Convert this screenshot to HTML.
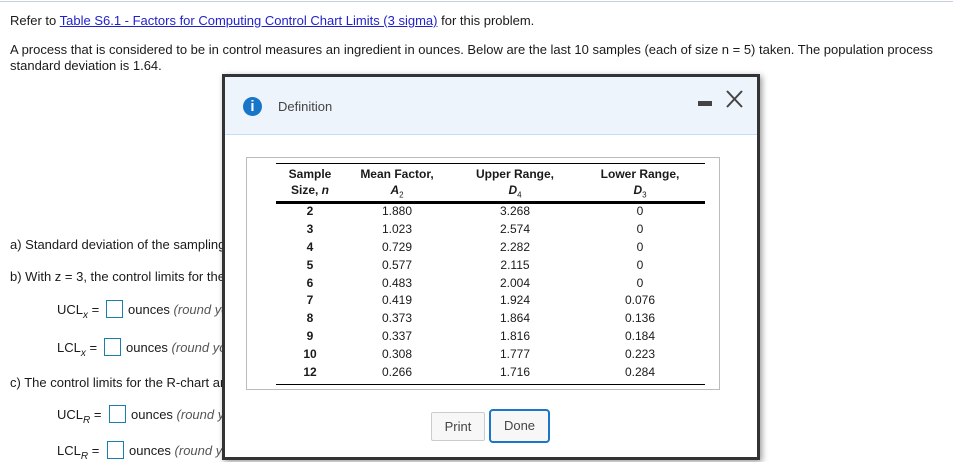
<!DOCTYPE html>
<html><head><style>
body{margin:0;width:953px;height:462px;position:relative;overflow:hidden;background:#fff;font-family:"Liberation Sans",Arial,sans-serif;font-size:13px;color:#1a1a1a}
.a{position:absolute;white-space:nowrap}
a{color:#2222cc;text-decoration:underline}
.box{position:absolute;width:15px;height:16px;border:1px solid #1a7fa8;background:#fff}
i.g{color:#555}
.sub{font-size:10px;position:relative;top:4px;font-style:italic}
.dlg{position:absolute;left:222px;top:74px;width:532px;height:380px;border:3px solid #333;background:#fff;box-shadow:2px 2px 6px rgba(0,0,0,.4);font-size:12px}
.hd{position:absolute;left:0;top:0;width:532px;height:57px;background:#eef4fc;border-bottom:1px solid #c6dcf2}
.tb{position:absolute;left:21px;top:80px;width:472px;height:231px;border:1px solid #bbb}
.r{position:absolute;height:14px;font-size:12px}
.c{position:absolute;text-align:center;width:80px}
.btn{position:absolute;font-size:13px;color:#444;text-align:center;background:#f7f7f7}
</style></head><body>
<div class="a" style="left:0;top:1px;width:953px;border-top:1px solid #c8d0de"></div>
<div class="a" style="left:10px;top:13px">Refer to <a>Table S6.1 - Factors for Computing Control Chart Limits (3 sigma)</a> for this problem.</div>
<div class="a" style="left:10px;top:42px">A process that is considered to be in control measures an ingredient in ounces. Below are the last 10 samples (each of size n = 5) taken. The population process</div>
<div class="a" style="left:10px;top:58px">standard deviation is 1.64.</div>
<div class="a" style="left:10px;top:237px">a) Standard deviation of the sampling distribution</div>
<div class="a" style="left:10px;top:269px">b) With z = 3, the control limits for the mean chart are:</div>
<div class="a" style="left:57px;top:302px">UCL<span class="sub">x</span> =</div>
<div class="box" style="left:106px;top:300px"></div>
<div class="a" style="left:128px;top:302px">ounces <i class="g">(round your response)</i></div>
<div class="a" style="left:57px;top:340px">LCL<span class="sub">x</span> =</div>
<div class="box" style="left:104px;top:338px"></div>
<div class="a" style="left:126px;top:340px">ounces <i class="g">(round your response)</i></div>
<div class="a" style="left:10px;top:375px">c) The control limits for the R-chart are:</div>
<div class="a" style="left:57px;top:407px">UCL<span class="sub">R</span> =</div>
<div class="box" style="left:109px;top:405px"></div>
<div class="a" style="left:131px;top:407px">ounces <i class="g">(round your response)</i></div>
<div class="a" style="left:57px;top:443px">LCL<span class="sub">R</span> =</div>
<div class="box" style="left:107px;top:441px"></div>
<div class="a" style="left:129px;top:443px">ounces <i class="g">(round your response)</i></div>

<div class="dlg">
 <div class="hd">
  <div class="a" style="left:18px;top:20px;width:19px;height:19px;border-radius:50%;background:#1876c9;color:#fff;font:bold 15px 'Liberation Sans',sans-serif;text-align:center;line-height:19px">i</div>
  <div class="a" style="left:53px;top:22px;font-size:13px;color:#444">Definition</div>
  <div class="a" style="left:473px;top:24px;width:14px;height:5px;background:#444"></div>
  <svg class="a" style="left:500px;top:13px" width="20" height="18"><path d="M2 1L17 17M17 1L2 17" stroke="#444" stroke-width="2"/></svg>
 </div>
 <div class="tb">
  <div class="a" style="left:29px;top:5px;width:429px;border-top:1px solid #000"></div>
  <div class="a" style="left:29px;top:43px;width:429px;border-top:3px solid #000"></div>
  <div class="a" style="left:29px;top:226px;width:429px;border-top:1px solid #000"></div>
  <div style="position:absolute;left:0;top:8px;font-weight:bold;font-size:12px;line-height:16px">
   <div class="c" style="left:23px">Sample<br>Size, <i>n</i></div>
   <div class="c" style="left:110px">Mean Factor,<br><i>A</i><sub style="font-size:8px;font-weight:normal">2</sub></div>
   <div class="c" style="left:218px;width:100px">Upper Range,<br><i>D</i><sub style="font-size:8px;font-weight:normal">4</sub></div>
   <div class="c" style="left:343px;width:100px">Lower Range,<br><i>D</i><sub style="font-size:8px;font-weight:normal">3</sub></div>
  </div>
  <div style="position:absolute;left:0;top:46px">
   <div class="r" style="top:0"><div class="c" style="left:23px;font-weight:bold">2</div><div class="c" style="left:110px">1.880</div><div class="c" style="left:228px">3.268</div><div class="c" style="left:353px">0</div></div>
   <div class="r" style="top:18px"><div class="c" style="left:23px;font-weight:bold">3</div><div class="c" style="left:110px">1.023</div><div class="c" style="left:228px">2.574</div><div class="c" style="left:353px">0</div></div>
   <div class="r" style="top:36px"><div class="c" style="left:23px;font-weight:bold">4</div><div class="c" style="left:110px">0.729</div><div class="c" style="left:228px">2.282</div><div class="c" style="left:353px">0</div></div>
   <div class="r" style="top:54px"><div class="c" style="left:23px;font-weight:bold">5</div><div class="c" style="left:110px">0.577</div><div class="c" style="left:228px">2.115</div><div class="c" style="left:353px">0</div></div>
   <div class="r" style="top:72px"><div class="c" style="left:23px;font-weight:bold">6</div><div class="c" style="left:110px">0.483</div><div class="c" style="left:228px">2.004</div><div class="c" style="left:353px">0</div></div>
   <div class="r" style="top:89px"><div class="c" style="left:23px;font-weight:bold">7</div><div class="c" style="left:110px">0.419</div><div class="c" style="left:228px">1.924</div><div class="c" style="left:353px">0.076</div></div>
   <div class="r" style="top:107px"><div class="c" style="left:23px;font-weight:bold">8</div><div class="c" style="left:110px">0.373</div><div class="c" style="left:228px">1.864</div><div class="c" style="left:353px">0.136</div></div>
   <div class="r" style="top:125px"><div class="c" style="left:23px;font-weight:bold">9</div><div class="c" style="left:110px">0.337</div><div class="c" style="left:228px">1.816</div><div class="c" style="left:353px">0.184</div></div>
   <div class="r" style="top:143px"><div class="c" style="left:23px;font-weight:bold">10</div><div class="c" style="left:110px">0.308</div><div class="c" style="left:228px">1.777</div><div class="c" style="left:353px">0.223</div></div>
   <div class="r" style="top:161px"><div class="c" style="left:23px;font-weight:bold">12</div><div class="c" style="left:110px">0.266</div><div class="c" style="left:228px">1.716</div><div class="c" style="left:353px">0.284</div></div>
  </div>
 </div>
 <div class="btn" style="left:206px;top:335px;width:52px;height:27px;line-height:27px;border:1px solid #ccc;border-radius:2px">Print</div>
 <div class="btn" style="left:264px;top:332px;width:57px;height:30px;line-height:30px;border:2px solid #1a76c6;border-radius:4px">Done</div>
</div>
</body></html>
